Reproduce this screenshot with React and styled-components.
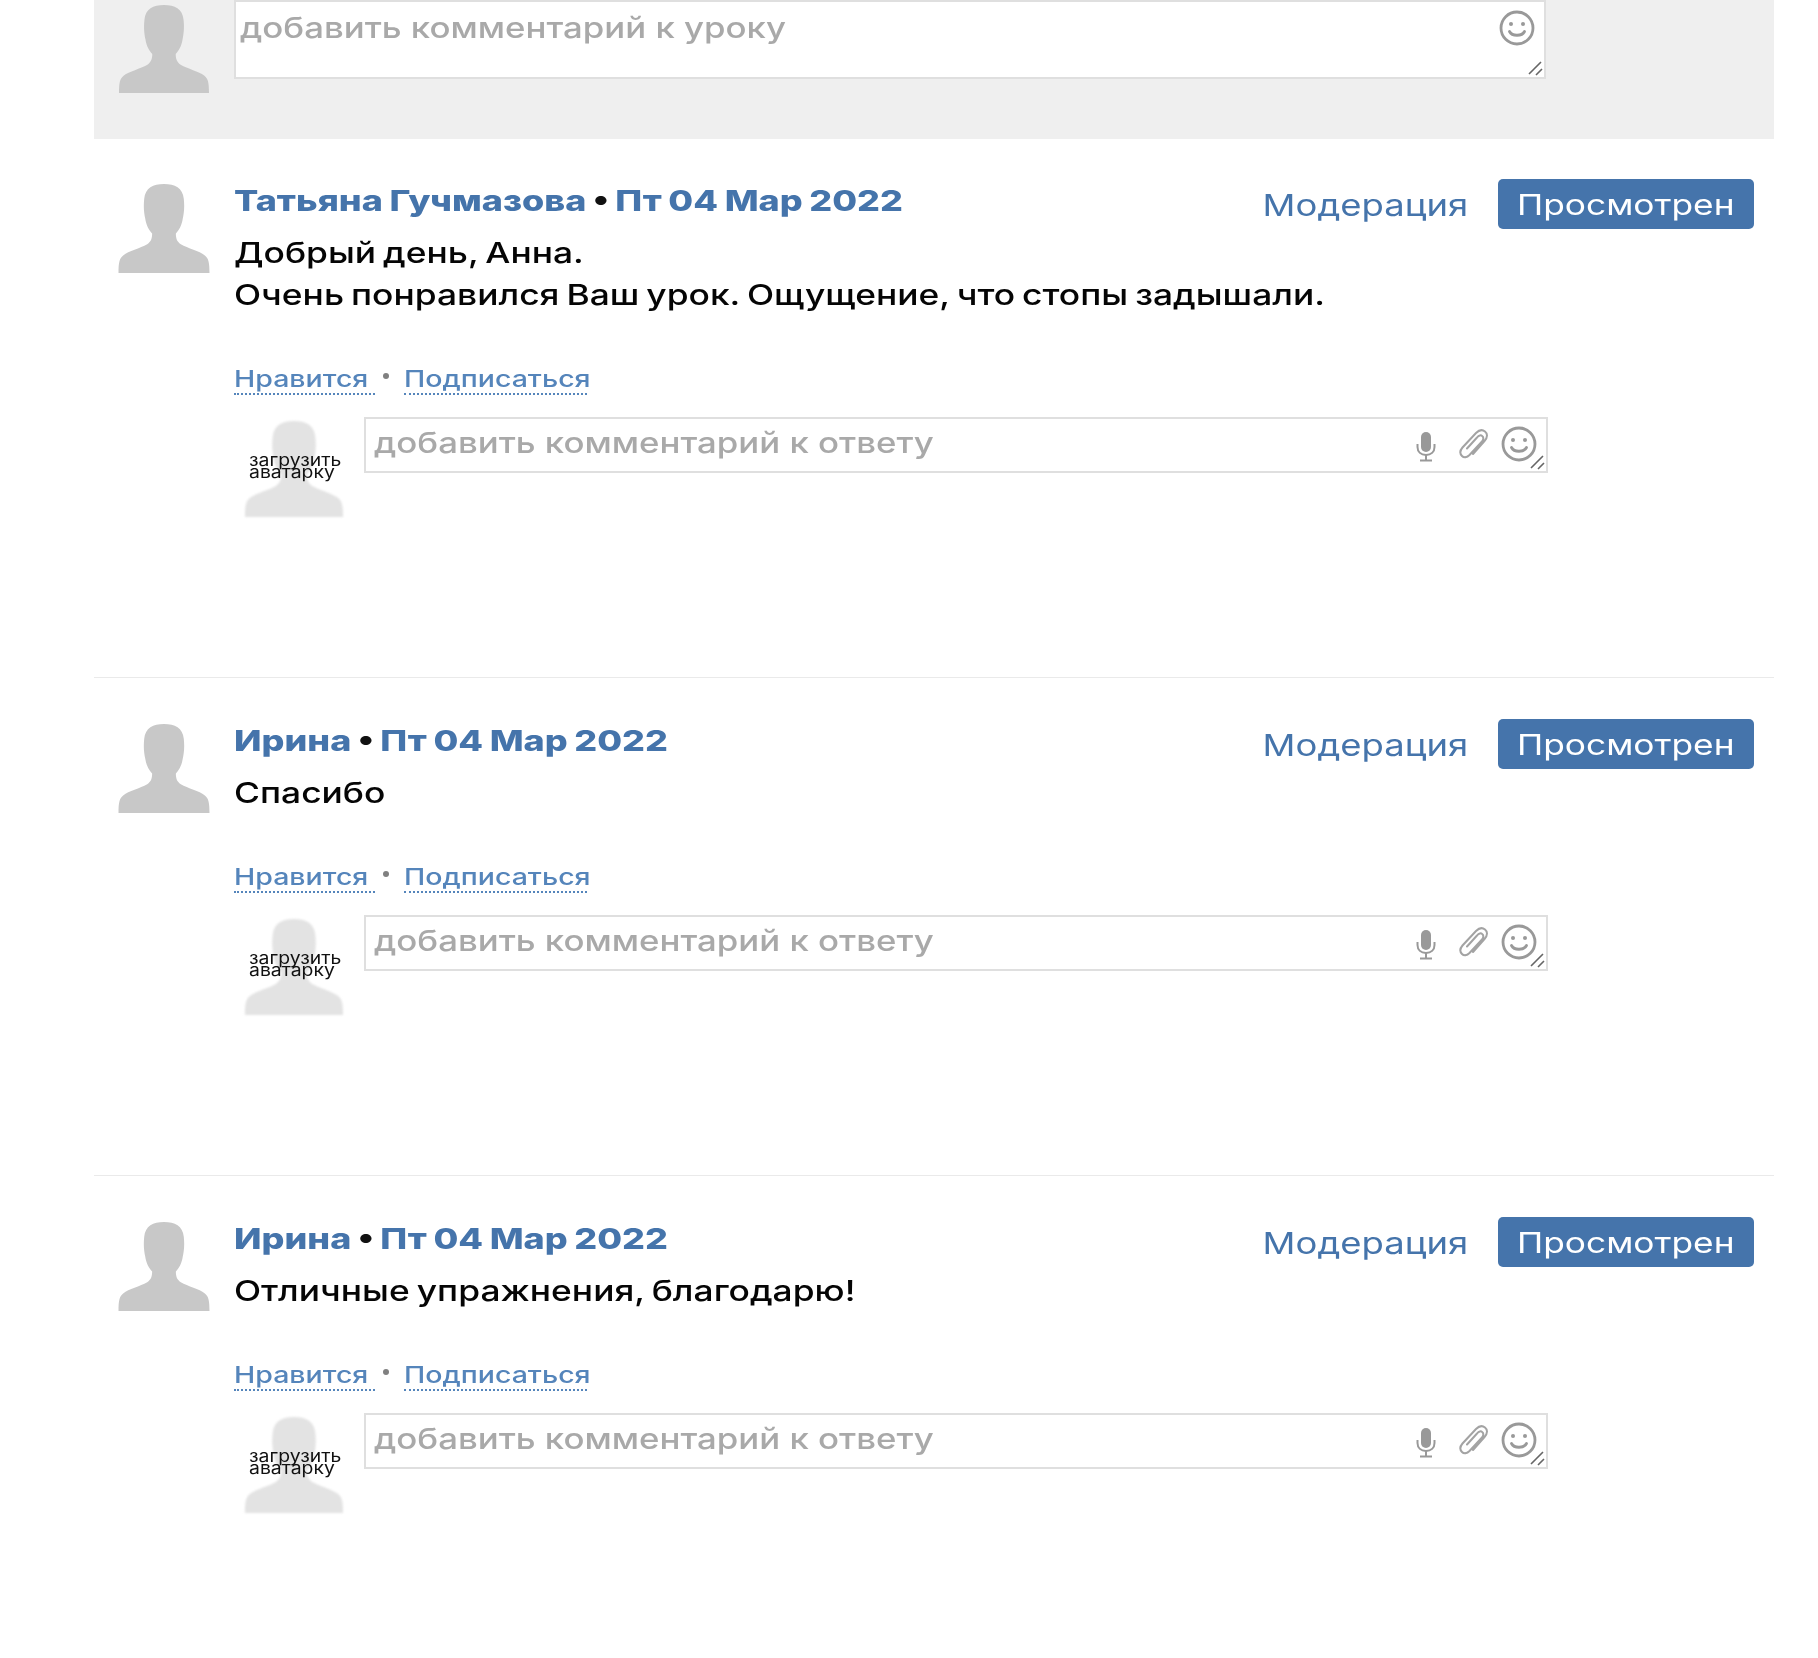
import React from "react";
import styled, { createGlobalStyle } from "styled-components";

const Global = createGlobalStyle`
  html, body { margin: 0; padding: 0; background: #fff; }
  body { font-family: Inter, "Liberation Sans", sans-serif; }
`;

const Page = styled.div`
  width: 1680px;
  height: 1658px;
  margin-left: 94px;
  overflow: hidden;
`;

// the reference font is an extended grotesque, so Inter gets stretched
const Wide = styled.span`
  display: inline-block;
  white-space: nowrap;
  transform: scaleX(${props => props.$x || 1.2});
  transform-origin: ${props => props.$right ? "right" : "left"} center;
`;

const NewComment = styled.div`
  display: flex;
  gap: 24px;
  height: 139px;
  padding-left: 24px;
  background: #efefef;
`;

const AvatarBox = styled.div`
  width: 92px;
  flex: none;
  margin-top: ${props => props.$top || 0}px;
  svg { display: block; filter: blur(0.5px); }
`;

const Field = styled.div`
  position: relative;
  box-sizing: border-box;
  background: #fff;
  border: 2px solid #dfdfdf;
  color: #a9a9a9;
  width: ${props => props.$reply ? 1184 : 1312}px;
  height: ${props => props.$reply ? 56 : 79}px;
  padding: ${props => props.$reply ? "7px 0 0 8px" : "9px 0 0 4px"};
  font-size: 29px;
  line-height: 34px;
  font-weight: 500;
`;

const FieldIcons = styled.div`
  position: absolute;
  top: ${props => props.$top}px;
  right: 9px;
  display: flex;
  align-items: flex-start;
  gap: 12px;
`;

const MicSlot = styled.div`
  margin: 6px 11px 0 0;
`;

const ClipSlot = styled.div`
  margin-top: 3px;
`;

const Grip = styled.svg`
  position: absolute;
  right: 1px;
  bottom: 1px;
`;

const Row = styled.div`
  box-sizing: border-box;
  height: ${props => props.$height}px;
  padding: ${props => props.$pad}px 20px 0 24px;
  display: flex;
  gap: 24px;
  border-bottom: 1px solid ${props => props.$last ? "transparent" : "#eaeaea"};
`;

const Main = styled.div`
  flex: 1;
  min-width: 0;
`;

const Head = styled.div`
  display: flex;
  justify-content: space-between;
  height: 50px;
`;

const Title = styled.div`
  color: #4574ab;
  padding-top: 5px;
  font-size: 29px;
  line-height: 34px;
  font-weight: 800;
  word-spacing: -1px;
  b { color: #111; font-weight: 800; }
`;

const Actions = styled.div`
  display: flex;
  align-items: center;
  gap: 30px;
`;

const Moderate = styled.div`
  color: #4574ab;
  font-size: 30px;
  padding-top: 2px;
  width: 204px;
  text-align: right;
`;

const Seen = styled.div`
  box-sizing: border-box;
  width: 256px;
  height: 50px;
  border-radius: 5px;
  background: #4574ab;
  color: #fff;
  font-size: 29px;
  line-height: 51px;
  padding-left: 19px;
`;

const Body = styled.div`
  margin-top: 3px;
  color: #050505;
  font-size: 29px;
  line-height: 42px;
  font-weight: 500;
  word-spacing: -2px;
  min-height: ${props => props.$lines * 42}px;
`;

const Links = styled.div`
  display: flex;
  margin-top: 46px;
  height: 34px;
  font-size: 23px;
  line-height: 30px;
  color: #5585bb;
  font-weight: 500;
`;

const LinkItem = styled.div`
  box-sizing: border-box;
  width: ${props => props.$w}px;
  height: 33px;
  padding-top: 2px;
  margin-left: ${props => props.$gap || 0}px;
  border-bottom: 2px dotted #5585bb;
`;

const Dot = styled.i`
  width: 6px;
  height: 6px;
  border-radius: 50%;
  background: #808080;
  margin: 11px 0 0 8px;
`;

const Reply = styled.div`
  display: flex;
  gap: 20px;
  margin: 21px 0 0 10px;
`;

const SmallAvatar = styled.div`
  position: relative;
  width: 100px;
  height: 100px;
  margin-top: 4px;
  svg { display: block; filter: blur(1px); }
`;

const Upload = styled.div`
  position: absolute;
  left: 5px;
  top: 33px;
  color: #111;
  font-size: 17px;
  line-height: 12px;
`;

const Person = ({ w, h, fill }) => (
  <svg width={w} height={h} viewBox="0 0 92 90">
    <path
      fill={fill}
      d="M46 0C35 0 27 4 26 15C25 24 26 30 27 35C28 42 31 47 34 50C34 55 33 58 29 61C22 65 10 68 5 72C1 75 0 79 0 90L92 90C92 79 91 75 87 72C82 68 70 65 63 61C59 58 58 55 58 50C61 47 64 42 65 35C66 30 67 24 66 15C65 4 57 0 46 0Z"
    />
  </svg>
);

const Smile = () => (
  <svg width="36" height="36" viewBox="0 0 36 36" fill="none" stroke="#999">
    <circle cx="18" cy="18" r="16" strokeWidth="2.8" />
    <circle cx="12" cy="14" r="2" fill="#999" stroke="none" />
    <circle cx="24" cy="14" r="2" fill="#999" stroke="none" />
    <path d="M10.5 21.5C13 26.5 23 26.5 25.5 21.5" strokeWidth="2.8" strokeLinecap="round" />
  </svg>
);

const Mic = () => (
  <svg width="20" height="30" viewBox="0 0 20 30" fill="none" stroke="#999">
    <rect x="5" y="0" width="10" height="20" rx="5" fill="#999" stroke="none" />
    <path d="M1.5 12V15C1.5 20 5 23 10 23C15 23 18.5 20 18.5 15V12" strokeWidth="2" />
    <path d="M10 23V28M4 28.5H16" strokeWidth="2" />
  </svg>
);

const Clip = () => (
  <svg width="30" height="30" viewBox="0 0 30 30" fill="none" stroke="#a3a3a3" strokeWidth="2" strokeLinecap="round">
    <path d="M14 25L25.5 12C29 8 28.5 4.5 26 2.5C23.5 0.5 20 1 17 4L3.5 18.5C0.5 22 1 25 3 27C5 29 8 28.5 10.5 26L23 12.5C25 10 24.5 8 23.2 7C22 6 20 6 18 8.5L8 19.5" />
  </svg>
);

const ResizeGrip = () => (
  <Grip width="15" height="15" viewBox="0 0 15 15" stroke="#666" strokeWidth="1.6">
    <path d="M1 13L13 1M8 14L14 8" />
  </Grip>
);

const AnswerForm = () => (
  <Reply>
    <SmallAvatar>
      <Person w={100} h={96} fill="#e3e3e3" />
      <Upload>
        <Wide $x={1.14}>загрузить</Wide>
        <br />
        <Wide $x={1.14}>аватарку</Wide>
      </Upload>
    </SmallAvatar>
    <Field $reply>
      <Wide>добавить комментарий к ответу</Wide>
      <FieldIcons $top={7}>
        <MicSlot><Mic /></MicSlot>
        <ClipSlot><Clip /></ClipSlot>
        <Smile />
      </FieldIcons>
      <ResizeGrip />
    </Field>
  </Reply>
);

const comments = [
  { id: 1, name: "Татьяна Гучмазова", text: ["Добрый день, Анна.", "Очень понравился Ваш урок. Ощущение, что стопы задышали."], height: 539, pad: 40 },
  { id: 2, name: "Ирина", text: ["Спасибо"], height: 498, pad: 41 },
  { id: 3, name: "Ирина", text: ["Отличные упражнения, благодарю!"], height: 482, pad: 41, last: true },
];

const Comment = ({ c }) => (
  <Row $height={c.height} $pad={c.pad} $last={c.last}>
    <AvatarBox $top={5}>
      <Person w={92} h={89} fill="#c8c8c8" />
    </AvatarBox>
    <Main>
      <Head>
        <Title>
          <Wide $x={1.24}>{c.name} <b>•</b> Пт 04 Мар 2022</Wide>
        </Title>
        <Actions>
          <Moderate><Wide $x={1.215} $right>Модерация</Wide></Moderate>
          <Seen><Wide $x={1.217}>Просмотрен</Wide></Seen>
        </Actions>
      </Head>
      <Body $lines={c.text.length}>
        {c.text.map(line => <div key={line}><Wide $x={1.22}>{line}</Wide></div>)}
      </Body>
      <Links>
        <LinkItem $w={141}><Wide $x={1.24}>Нравится</Wide></LinkItem>
        <Dot />
        <LinkItem $w={183} $gap={15}><Wide $x={1.24}>Подписаться</Wide></LinkItem>
      </Links>
      <AnswerForm />
    </Main>
  </Row>
);

export default function App() {
  return (
    <Page>
      <Global />
      <NewComment>
        <AvatarBox $top={5}>
          <Person w={92} h={88} fill="#c8c8c8" />
        </AvatarBox>
        <Field>
          <Wide>добавить комментарий к уроку</Wide>
          <FieldIcons $top={8}>
            <Smile />
          </FieldIcons>
          <ResizeGrip />
        </Field>
      </NewComment>
      {comments.map(c => <Comment key={c.id} c={c} />)}
    </Page>
  );
}
